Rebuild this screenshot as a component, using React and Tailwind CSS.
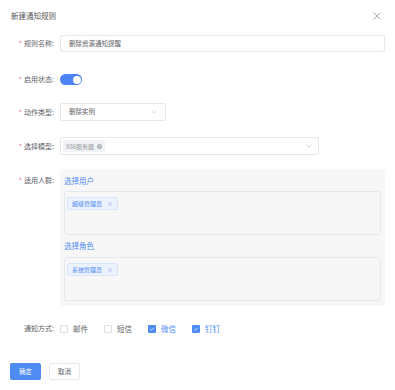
import React from "react";

const font = { fontFamily: '"Noto Sans CJK SC", "Noto Sans", sans-serif' };

function Label({ children, required = true }) {
  return (
    <div className="w-[49px] shrink-0 pr-[6px] text-right text-[7px] leading-[17px] text-[#606266]">
      {required && <span className="mr-[2px] text-[#f56c6c]">*</span>}
      {children}
    </div>
  );
}

function Chevron() {
  return (
    <svg width="6" height="4" viewBox="0 0 6 4" className="shrink-0">
      <path d="M0.5 0.8 L3 3.2 L5.5 0.8" fill="none" stroke="#c0c4cc" strokeWidth="0.7" />
    </svg>
  );
}

function BlueTag({ text }) {
  return (
    <div className="flex h-[13px] items-center gap-[5px] rounded-[2px] border border-[#d9e5ff] bg-[#ecf3ff] px-[4px] text-[6px] text-[#4e8bf5]">
      <span>{text}</span>
      <span className="text-[6px] text-[#8fa8d8]">×</span>
    </div>
  );
}

function Check({ checked, label }) {
  return (
    <div className="flex items-center">
      {checked ? (
        <div className="flex h-[8px] w-[8px] items-center justify-center rounded-[1px] bg-[#4e8bf5]">
          <svg width="6" height="6" viewBox="0 0 6 6">
            <path d="M1.2 3 L2.5 4.2 L4.8 1.8" fill="none" stroke="#fff" strokeWidth="0.7" />
          </svg>
        </div>
      ) : (
        <div className="h-[8px] w-[8px] rounded-[1px] border border-[#dcdfe6] bg-white" />
      )}
      <span className={`ml-[5px] text-[7.5px] ${checked ? "text-[#4e8bf5]" : "text-[#606266]"}`}>{label}</span>
    </div>
  );
}

export default function App() {
  return (
    <div className="h-[390px] w-[395px] bg-white" style={font}>
      <div className="flex items-center justify-between pl-[11px] pr-[14px] pt-[10px]">
        <div className="text-[7.5px] leading-[12px] text-[#555]">新建通知规则</div>
        <svg width="8" height="8" viewBox="0 0 8 8">
          <path d="M0.5 0.5 L7.5 7.5 M7.5 0.5 L0.5 7.5" stroke="#909399" strokeWidth="0.8" />
        </svg>
      </div>

      <div className="pl-[11px] pr-[10px] pt-[13px]">
        {/* row 1 */}
        <div className="flex items-center">
          <Label>规则名称:</Label>
          <div className="flex h-[17px] flex-1 items-center rounded-[2px] border border-[#e4e7ed] px-[8px] text-[6.5px] text-[#606266]">
            删除资源通知提醒
          </div>
        </div>

        {/* row 2 */}
        <div className="mt-[19px] flex h-[17px] items-center">
          <Label>启用状态:</Label>
          <div className="relative h-[11px] w-[22px] rounded-full bg-[#4d84fb]">
            <div className="absolute right-[1.5px] top-[1.5px] h-[8px] w-[8px] rounded-full bg-white" />
          </div>
        </div>

        {/* row 3 */}
        <div className="mt-[15px] flex items-center">
          <Label>动作类型:</Label>
          <div className="flex h-[18px] w-[106px] items-center justify-between rounded-[2px] border border-[#e4e7ed] pl-[8px] pr-[8px] text-[6.5px] text-[#606266]">
            <span>删除实例</span>
            <Chevron />
          </div>
        </div>

        {/* row 4 */}
        <div className="mt-[16px] flex items-center">
          <Label>选择模型:</Label>
          <div className="flex h-[18px] w-[259px] items-center justify-between rounded-[2px] border border-[#e4e7ed] pl-[2px] pr-[6px]">
            <div className="flex h-[12px] items-center gap-[3px] rounded-[2px] bg-[#f0f2f5] px-[3px] text-[6px] text-[#9a9ca1]">
              <span>X86服务器</span>
              <span className="flex h-[5px] w-[5px] items-center justify-center rounded-full bg-[#a8abb2] text-[4px] leading-none text-white">×</span>
            </div>
            <Chevron />
          </div>
        </div>

        {/* row 5 */}
        <div className="mt-[14px] flex items-start">
          <div className="pt-[3px]">
            <Label>适用人群:</Label>
          </div>
          <div className="flex-1 rounded-[3px] bg-[#f7f7f8] px-[4px] pb-[5px] pt-[6px]">
            <div className="text-[7.5px] leading-[12px] text-[#4e8bf5]">选择用户</div>
            <div className="mt-[4px] h-[44px] rounded-[3px] border border-[#e4e7ed] px-[2px] pt-[5px]">
              <div className="flex">
                <BlueTag text="超级管理员" />
              </div>
            </div>
            <div className="mt-[5px] text-[7.5px] leading-[12px] text-[#4e8bf5]">选择角色</div>
            <div className="mt-[5px] h-[44px] rounded-[3px] border border-[#e4e7ed] px-[2px] pt-[5px]">
              <div className="flex">
                <BlueTag text="系统管理员" />
              </div>
            </div>
          </div>
        </div>

        {/* notify */}
        <div className="mt-[14px] flex h-[17px] items-center">
          <Label required={false}>通知方式:</Label>
          <div className="flex items-center gap-[16px]">
            <Check label="邮件" />
            <Check label="短信" />
            <Check checked label="微信" />
            <Check checked label="钉钉" />
          </div>
        </div>
      </div>

      <div className="mt-[26px] flex gap-[8px] pl-[10px]">
        <div className="flex h-[17px] w-[31px] items-center justify-center rounded-[2px] bg-[#4e8bf5] text-[6.5px] text-white">确定</div>
        <div className="flex h-[17px] w-[31px] items-center justify-center rounded-[2px] border border-[#e4e7ed] bg-white text-[6.5px] text-[#606266]">取消</div>
      </div>
    </div>
  );
}
